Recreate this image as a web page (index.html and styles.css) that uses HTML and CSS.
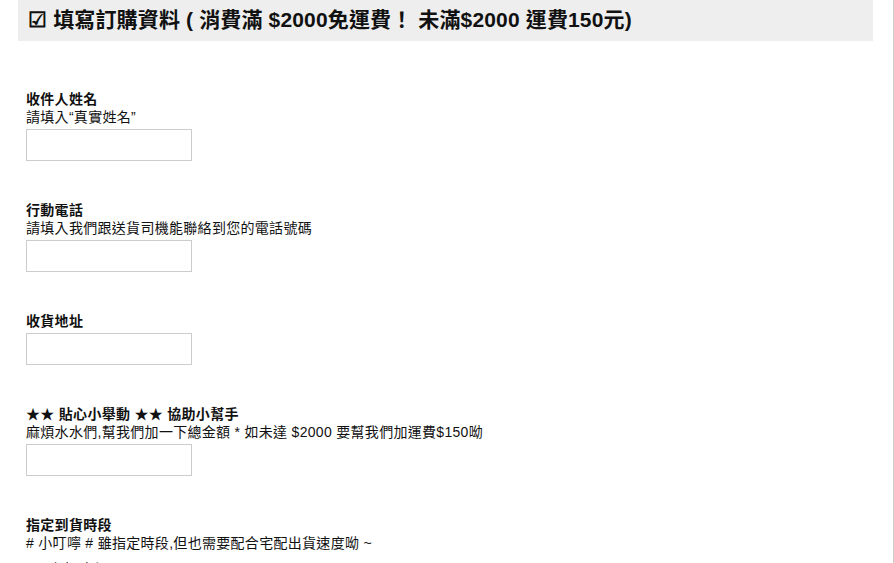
FILE: index.html
```html
<!DOCTYPE html>
<html>
<head>
    <meta charset="utf-8">
    <title>填寫訂購資料</title>
    <link rel="stylesheet" href="styles.css">
</head>
<body>
    <div class="page">
        <h2 class="form-title">☑ 填寫訂購資料 ( 消費滿 $2000免運費！ 未滿$2000 運費150元)</h2>

        <form class="order-form">
            <div class="field">
                <label for="name">收件人姓名</label>
                <div class="hint">請填入“真實姓名”</div>
                <input type="text" id="name">
            </div>

            <div class="field">
                <label for="phone">行動電話</label>
                <div class="hint">請填入我們跟送貨司機能聯絡到您的電話號碼</div>
                <input type="text" id="phone">
            </div>

            <div class="field">
                <label for="address">收貨地址</label>
                <input type="text" id="address">
            </div>

            <div class="field">
                <label for="total">★★ 貼心小舉動 ★★ 協助小幫手</label>
                <div class="hint">麻煩水水們,幫我們加一下總金額 * 如未達 $2000 要幫我們加運費$150呦</div>
                <input type="text" id="total">
            </div>

            <div class="field">
                <label>指定到貨時段</label>
                <div class="hint"># 小叮嚀 # 雖指定時段,但也需要配合宅配出貨速度呦 ~</div>
                <div class="radio-row"><input type="radio" name="time" id="t1"> <span>上午時段</span></div>
                <div class="radio-row"><input type="radio" name="time" id="t2"> <span>下午時段</span></div>
            </div>
        </form>
    </div>
</body>
</html>
```

FILE: styles.css
```css
* {
    box-sizing: border-box;
}

body {
    margin: 0;
    font-family: 'Liberation Sans', 'Noto Sans CJK TC', sans-serif;
    color: #111;
    background: #fff;
}

.page {
    width: 894px;
    min-height: 100vh;
    padding: 0 20px 0 18px;
    border-right: 1px solid #cfcfcf;
}

.form-title {
    margin: 0;
    background: #eeeeee;
    height: 41px;
    padding: 7px 10px 0;
    font-size: 21px;
    line-height: 26px;
    font-weight: 700;
    letter-spacing: 0.15px;
    color: #111;
    white-space: nowrap;
}

.order-form {
    padding: 49px 0 0 8px;
}

.field {
    margin-bottom: 40px;
}

.field label {
    display: block;
    font-size: 14px;
    line-height: 18px;
    font-weight: 700;
    letter-spacing: 0.3px;
}

.hint {
    font-size: 14px;
    line-height: 18px;
    letter-spacing: 0.3px;
}

.field input[type="text"] {
    display: block;
    width: 166px;
    height: 32px;
    margin-top: 3px;
    border: 1px solid #cccccc;
    background: #fff;
    font-size: 14px;
}

.radio-row {
    display: flex;
    align-items: center;
    gap: 10px;
    margin-top: 8px;
    font-size: 14px;
    line-height: 18px;
    letter-spacing: 0.3px;
}

.radio-row input {
    margin: 0;
}
```
